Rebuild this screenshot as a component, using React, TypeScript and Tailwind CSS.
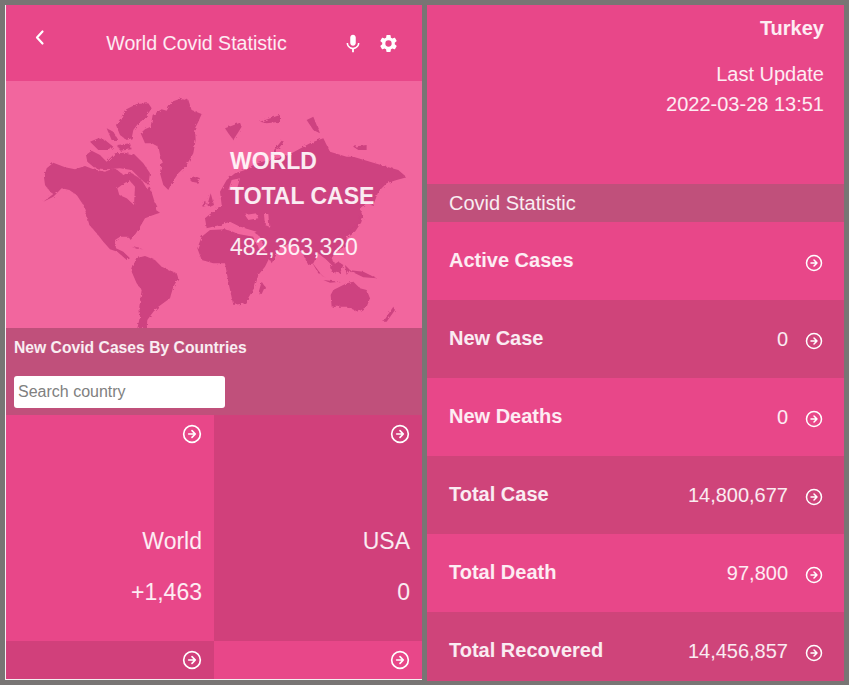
const font = { fontFamily: '"Liberation Sans", Arial, sans-serif' }

function GoIcon({ className = '' }: { className?: string }) {
  return (
    <svg viewBox="0 0 24 24" className={`shrink-0 text-white ${className}`} fill="none" stroke="currentColor" strokeWidth="2" strokeLinecap="round" strokeLinejoin="round">
      <circle cx="12" cy="12" r="10" />
      <path d="M12 8 16 12 12 16M8 12h8" />
    </svg>
  )
}

function WorldMap() {
  return (
    <svg viewBox="6 81 416 247" className="absolute inset-0 w-full h-full">
      <defs>
        <filter id="coast" x="-5%" y="-5%" width="110%" height="110%">
          <feTurbulence type="fractalNoise" baseFrequency="0.09" numOctaves="3" seed="4" result="n" />
          <feDisplacementMap in="SourceGraphic" in2="n" scale="10" />
        </filter>
      </defs>
      {/* americas + arctic */}
      <g transform="translate(30 90) scale(0.3333)" filter="url(#coast)">
        <g fill="#ce4280">
          <path d="M332 130 345 118 362 110 368 75 395 58 410 62 425 35 455 25 475 30 485 60 515 72 505 95 495 115 497 150 490 190 470 225 445 250 425 280 415 300 400 285 390 250 395 215 385 170 365 160 345 160Z" />
          <path d="M258 105 275 80 285 60 320 42 355 40 365 55 345 85 325 100 310 120 305 145 290 150 270 135Z" />
          <path d="M180 155 205 145 225 150 250 170 240 180 205 180Z" />
          <path d="M230 115 250 125 265 150 245 150Z" />
          <path d="M262 165 300 160 305 178 270 182Z" />
          <path d="M168 195 185 182 210 195 230 215 255 190 285 188 315 195 340 220 360 250 355 285 335 270 305 240 270 235 230 238 195 235 172 215Z" />
          <path d="M42 262 50 235 70 218 105 232 135 238 165 228 190 238 225 245 250 235 262 240 280 255 300 245 335 270 350 295 360 290 372 330 382 350 378 360 390 368 370 375 345 385 330 410 318 430 302 450 295 440 270 440 255 450 258 475 280 485 300 505 290 510 262 485 240 478 220 455 200 430 178 405 170 375 160 345 140 315 118 300 95 295 70 320 40 335 70 312 60 305 45 285Z" />
          <path d="M480 265 495 258 510 265 502 278 485 275Z" />
          <path d="M305 470 340 478 320 476Z" />
          <path d="M305 545 318 505 345 498 375 510 395 530 440 550 445 565 430 590 420 625 385 650 370 665 352 690 350 715 322 715 330 680 328 650 335 600 320 580Z" />
        </g>
        <path d="M262 295 285 278 300 272 315 290 312 345 290 325 268 315Z" fill="#f2669e" />
      </g>
      {/* eurasia, africa, oceania */}
      <g transform="translate(190 90) scale(0.3333)" filter="url(#coast)">
        <g fill="#ce4280">
          <path d="M45 385 75 360 95 345 90 305 110 270 135 250 165 240 195 222 235 210 265 205 295 195 360 160 385 150 400 145 420 185 470 200 490 200 540 215 590 230 625 240 650 262 620 270 590 280 565 305 550 345 530 340 510 355 520 385 495 420 470 440 470 470 440 480 425 505 440 530 425 525 410 510 385 490 370 520 355 525 335 485 300 460 270 475 245 520 225 480 210 440 190 425 150 410 120 395 90 405 50 415Z" />
          <path d="M22 475 35 440 60 420 110 418 145 432 190 440 205 475 225 485 250 480 225 530 205 555 195 590 165 640 130 645 118 590 105 520 70 520 35 510Z" />
          <path d="M205 610 215 575 225 590 215 612Z" />
          <path d="M52 345 62 310 72 345 58 352Z" />
          <path d="M36 340 46 332 48 348 38 350Z" />
          <path d="M240 195 275 152 282 155 250 195Z" />
          <path d="M105 115 150 98 155 110 130 150 115 130Z" />
          <path d="M210 95 270 75 270 95 230 100Z" />
          <path d="M350 90 370 80 390 130 370 120Z" />
          <path d="M490 170 530 165 530 180 505 180Z" />
          <path d="M470 430 505 400 505 375 515 395 495 425Z" />
          <path d="M365 515 395 555 410 565 385 550Z" />
          <path d="M420 530 445 515 460 525 450 550 425 545Z" />
          <path d="M400 570 450 575 420 578Z" />
          <path d="M465 525 480 540 470 555Z" />
          <path d="M475 540 520 545 560 565 520 562Z" />
          <path d="M422 615 430 600 470 580 490 575 510 595 530 600 540 625 530 650 505 665 470 650 425 650Z" />
          <path d="M580 695 610 650 615 660 590 695Z" />
        </g>
        <g fill="#f2669e">
          <path d="M95 405 150 410 200 425 190 430 150 425 110 420Z" />
          <path d="M125 270 150 265 140 300 115 300Z" />
          <path d="M165 375 200 370 205 385 175 390Z" />
          <path d="M222 372 235 372 238 410 225 405Z" />
        </g>
      </g>
    </svg>
  )
}

function CountryTile({ dark, name, value }: { dark?: boolean; name: string; value: string }) {
  return (
    <div className={`h-[226px] pt-[9px] pr-3 flex flex-col items-end ${dark ? 'bg-[#d1407b]' : 'bg-[#e84789]'}`}>
      <GoIcon className="w-5 h-5" />
      <div className="mt-[83px] text-[23px] leading-[28px] text-white/90">{name}</div>
      <div className="mt-[23px] text-[23px] leading-[28px] text-white/90">{value}</div>
    </div>
  )
}

function PartialTile({ dark }: { dark?: boolean }) {
  return (
    <div className={`h-[38px] pt-[9px] pr-3 flex justify-end ${dark ? 'bg-[#d1407b]' : 'bg-[#e84789]'}`}>
      <GoIcon className="w-5 h-5" />
    </div>
  )
}

const stats = [
  { label: 'Active Cases', value: '' },
  { label: 'New Case', value: '0' },
  { label: 'New Deaths', value: '0' },
  { label: 'Total Case', value: '14,800,677' },
  { label: 'Total Death', value: '97,800' },
  { label: 'Total Recovered', value: '14,456,857' },
]

export default function App() {
  return (
    <div className="w-[849px] h-[685px] bg-[#787574] flex items-start overflow-hidden text-white" style={font}>
      {/* left phone */}
      <div className="ml-[5px] mt-[5px] w-[417px] h-[675px] flex flex-col border-l border-b border-[#f4f0f2] overflow-hidden">
        <div className="h-[76px] shrink-0 bg-[#e84789] flex items-start relative">
          <svg viewBox="0 0 24 24" className="absolute left-[22px] top-[20px] w-[24px] h-[24px]" fill="none" stroke="white" strokeWidth="2.2" strokeLinecap="round" strokeLinejoin="round">
            <path d="M14.5 6.5 9 12.5l5.5 6" />
          </svg>
          <div className="w-full text-center pt-[26px] pr-[35px] text-[19.6px] leading-6 text-white/90">World Covid Statistic</div>
          <svg viewBox="0 0 24 24" className="absolute left-[336px] top-[28px] w-[22px] h-[22px]" fill="white">
            <path d="M12 14c1.66 0 3-1.34 3-3V5c0-1.66-1.34-3-3-3S9 3.34 9 5v6c0 1.66 1.34 3 3 3zm5.3-3c0 3-2.54 5.1-5.3 5.1S6.7 14 6.7 11H5c0 3.41 2.72 6.23 6 6.72V21h2v-3.28c3.28-.49 6-3.31 6-6.72h-1.7z" />
          </svg>
          <svg viewBox="0 0 24 24" className="absolute left-[372px] top-[28px] w-[21px] h-[21px]" fill="white">
            <path d="M19.14 12.94c.04-.3.06-.61.06-.94s-.02-.64-.07-.94l2.03-1.58a.5.5 0 0 0 .12-.61l-1.92-3.32a.5.5 0 0 0-.59-.22l-2.39.96a7 7 0 0 0-1.62-.94l-.36-2.54a.48.48 0 0 0-.48-.41h-3.84a.48.48 0 0 0-.47.41l-.36 2.54c-.59.24-1.13.57-1.62.94l-2.39-.96a.49.49 0 0 0-.59.22L2.74 8.87a.48.48 0 0 0 .12.61l2.03 1.58c-.05.3-.09.63-.09.94s.02.64.07.94l-2.03 1.58a.5.5 0 0 0-.12.61l1.92 3.32c.12.22.37.29.59.22l2.39-.96c.5.38 1.03.7 1.62.94l.36 2.54c.05.24.24.41.48.41h3.84c.24 0 .44-.17.47-.41l.36-2.54c.59-.24 1.13-.56 1.62-.94l2.39.96c.22.08.47 0 .59-.22l1.92-3.32a.48.48 0 0 0-.12-.61l-2.01-1.58zM12 15.6A3.6 3.6 0 1 1 12 8.4a3.6 3.6 0 0 1 0 7.2z" />
          </svg>
        </div>

        <div className="h-[247px] shrink-0 bg-[#f2669e] relative">
          <WorldMap />
          <div className="relative pl-[224px] pt-[63px]">
            <div className="text-[23px] leading-[35px] font-bold text-white/90">WORLD<br />TOTAL CASE</div>
            <div className="mt-[19px] text-[23px] leading-[28px] text-white/90">482,363,320</div>
          </div>
        </div>

        <div className="h-[87px] shrink-0 bg-[#c0507b] px-2 pt-[10px]">
          <div className="text-[15.7px] leading-[19px] font-bold text-white/90">New Covid Cases By Countries</div>
          <input
            className="mt-[19px] block w-[211px] h-[32px] bg-white rounded-[3px] px-1 text-[16px] outline-none placeholder:text-[#808080]"
            style={font}
            placeholder="Search country"
          />
        </div>

        <div className="grid grid-cols-2 flex-1">
          <CountryTile name="World" value="+1,463" />
          <CountryTile dark name="USA" value="0" />
          <PartialTile dark />
          <PartialTile />
        </div>
      </div>

      {/* right phone */}
      <div className="ml-[5px] mt-[5px] w-[417px] h-[676px] flex flex-col overflow-hidden">
        <div className="h-[179px] shrink-0 bg-[#e84789] px-5 pt-[11px] text-right">
          <div className="text-[20px] leading-6 font-bold text-white/90">Turkey</div>
          <div className="mt-[22px] text-[20px] leading-6 text-white/90">Last Update</div>
          <div className="mt-[6px] text-[20px] leading-6 text-white/90">2022-03-28 13:51</div>
        </div>
        <div className="h-[38px] shrink-0 bg-[#c0507b] pl-[22px] flex items-center text-[20px] text-white/90">Covid Statistic</div>
        {stats.map((s, i) => (
          <div key={s.label} className={`h-[78px] shrink-0 flex pl-[22px] pr-[21px] pt-[26px] ${i % 2 ? 'bg-[#cf447a]' : 'bg-[#e84789]'}`}>
            <div className="text-[20px] leading-6 font-bold text-white/90">{s.label}</div>
            <div className="ml-auto text-[20px] leading-6 text-white/90 mt-[1px]">{s.value}</div>
            <GoIcon className="w-[18px] h-[18px] ml-[17px] mt-[6px]" />
          </div>
        ))}
      </div>
    </div>
  )
}
